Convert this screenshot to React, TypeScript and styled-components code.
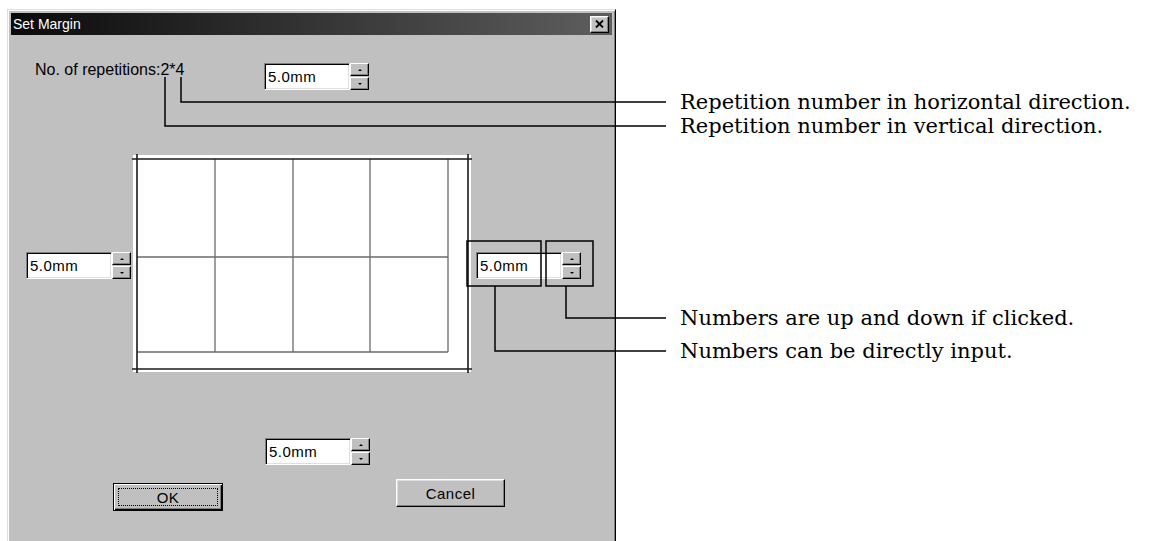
import React from 'react'
import styled, { createGlobalStyle } from 'styled-components'

const GlobalStyle = createGlobalStyle`
  html, body {
    margin: 0;
    padding: 0;
    background: #fff;
  }
  body {
    font-family: 'Liberation Sans', Arial, sans-serif;
  }
`

const Page = styled.div`
  position: relative;
  display: flex;
  align-items: flex-start;
  width: 1154px;
  height: 541px;
  padding: 9px 0 0 7px;
  box-sizing: border-box;
  overflow: hidden;
  background: #fff;
`

const Dialog = styled.div`
  display: flex;
  flex-direction: column;
  flex: none;
  width: 609px;
  height: 545px;
  box-sizing: border-box;
  padding: 3px;
  background: #c0c0c0;
  border-top: 1px solid #dfdfdf;
  border-left: 1px solid #dfdfdf;
  border-right: 1px solid #000;
  border-bottom: 1px solid #000;
  box-shadow: inset 1px 1px 0 #fff, inset -1px -1px 0 #808080;
`

const TitleBar = styled.div`
  display: flex;
  align-items: center;
  justify-content: space-between;
  height: 22px;
  padding: 0 3px 0 2px;
  background: linear-gradient(to right, #0a0a0a, #5e5e5e);
  color: #fff;
  font-size: 14px;
`

const CloseButton = styled.div`
  display: flex;
  align-items: center;
  justify-content: center;
  width: 19px;
  height: 17px;
  box-sizing: border-box;
  background: #c0c0c0;
  border-top: 1px solid #fff;
  border-left: 1px solid #fff;
  border-right: 1px solid #000;
  border-bottom: 1px solid #000;
  box-shadow: inset -1px -1px 0 #808080, inset 1px 1px 0 #dfdfdf;
`

const Client = styled.div`
  display: flex;
  flex-direction: column;
  flex: 1;
`

const Row = styled.div<{ $top: number; $left: number }>`
  display: flex;
  align-items: flex-start;
  margin-top: ${p => p.$top}px;
  padding-left: ${p => p.$left}px;
`

const RepLabel = styled.div`
  width: 229px;
  margin-top: -2px;
  font-size: 16px;
  line-height: 18px;
  color: #000;
`

const Spin = styled.div<{ $top?: number; $left?: number }>`
  display: flex;
  flex: none;
  height: 27px;
  margin-top: ${p => p.$top ?? 0}px;
  margin-left: ${p => p.$left ?? 0}px;
`

const Field = styled.div`
  display: flex;
  align-items: center;
  width: 86px;
  height: 27px;
  box-sizing: border-box;
  padding-left: 3px;
  background: #fff;
  border-top: 1px solid #808080;
  border-left: 1px solid #808080;
  border-right: 1px solid #fff;
  border-bottom: 1px solid #fff;
  box-shadow: inset 1px 1px 0 #000, inset -1px -1px 0 #dfdfdf;
  font-size: 15px;
  letter-spacing: 0.5px;
  color: #000;
`

const Arrows = styled.div`
  display: flex;
  flex-direction: column;
  gap: 1px;
  width: 19px;
`

const ArrowButton = styled.div`
  display: flex;
  align-items: center;
  justify-content: center;
  height: 13px;
  box-sizing: border-box;
  background: #c0c0c0;
  border-top: 1px solid #fff;
  border-left: 1px solid #fff;
  border-right: 1px solid #000;
  border-bottom: 1px solid #000;
  box-shadow: inset -1px -1px 0 #808080;
`

const Tri = styled.span<{ $dir: 'up' | 'down' }>`
  width: 0;
  height: 0;
  border-left: 2px solid transparent;
  border-right: 2px solid transparent;
  ${p => (p.$dir === 'up' ? 'border-bottom: 2px solid #000;' : 'border-top: 2px solid #000;')}
`

const Preview = styled.svg`
  display: block;
  flex: none;
`

const PushButton = styled.button<{ $width: number; $default?: boolean; $top?: number; $left?: number }>`
  display: flex;
  align-items: stretch;
  width: ${p => p.$width}px;
  height: 28px;
  margin-top: ${p => p.$top ?? 0}px;
  margin-left: ${p => p.$left ?? 0}px;
  padding: 4px;
  box-sizing: border-box;
  background: #c0c0c0;
  font: 15px 'Liberation Sans', Arial, sans-serif;
  letter-spacing: 0.5px;
  color: #000;
  ${p =>
    p.$default
      ? `border: 1px solid #000;
         box-shadow: inset 1px 1px 0 #fff, inset -1px -1px 0 #000, inset -2px -2px 0 #808080;`
      : `border-top: 1px solid #fff;
         border-left: 1px solid #fff;
         border-right: 1px solid #000;
         border-bottom: 1px solid #000;
         box-shadow: inset -1px -1px 0 #808080, inset 1px 1px 0 #dfdfdf;`}
`

const Caption = styled.span<{ $focus?: boolean }>`
  display: flex;
  flex: 1;
  align-items: center;
  justify-content: center;
  border: 1px dotted ${p => (p.$focus ? '#000' : 'transparent')};
`

const Notes = styled.div`
  display: flex;
  flex-direction: column;
  margin-left: 64px;
`

const Note = styled.div<{ $gap: number }>`
  margin-top: ${p => p.$gap}px;
  font-family: 'DejaVu Serif', 'Liberation Serif', serif;
  font-size: 21px;
  line-height: 24px;
  color: #000;
  white-space: nowrap;
`

const Callouts = styled.svg`
  position: absolute;
  left: 0;
  top: 0;
  pointer-events: none;
`

const Spinner = ({ top, left }: { top?: number; left?: number }) => (
  <Spin $top={top} $left={left}>
    <Field>5.0mm</Field>
    <Arrows>
      <ArrowButton>
        <Tri $dir="up" />
      </ArrowButton>
      <ArrowButton>
        <Tri $dir="down" />
      </ArrowButton>
    </Arrows>
  </Spin>
)

const cols = [84, 162, 239, 317]

const PagePreview = () => (
  <Preview width={342} height={222} viewBox="0 0 342 222">
    <rect x={2} y={3} width={338} height={217} fill="#fff" />
    <g stroke="#6a6a6a" strokeWidth={1.3}>
      {cols.map(x => (
        <line key={x} x1={x} y1={7} x2={x} y2={200} />
      ))}
      <line x1={6} y1={105} x2={317} y2={105} />
      <line x1={6} y1={200} x2={317} y2={200} />
    </g>
    <g stroke="#1a1a1a" strokeWidth={1.6}>
      <line x1={6} y1={2} x2={6} y2={221} />
      <line x1={337} y1={2} x2={337} y2={221} />
      <line x1={1} y1={7} x2={341} y2={7} />
      <line x1={1} y1={217} x2={341} y2={217} />
    </g>
  </Preview>
)

export default function App() {
  return (
    <Page>
      <GlobalStyle />
      <Dialog>
        <TitleBar>
          <span>Set Margin</span>
          <CloseButton>
            <svg width="9" height="8" viewBox="0 0 9 8">
              <path d="M1 0.5 L8 7.5 M8 0.5 L1 7.5" stroke="#000" strokeWidth="1.8" />
            </svg>
          </CloseButton>
        </TitleBar>
        <Client>
          <Row $top={28} $left={24}>
            <RepLabel>No. of repetitions:2*4</RepLabel>
            <Spinner />
          </Row>
          <Row $top={62} $left={15}>
            <Spinner top={100} />
            <PagePreview />
            <Spinner top={100} left={3} />
          </Row>
          <Row $top={64} $left={254}>
            <Spinner />
          </Row>
          <Row $top={14} $left={102}>
            <PushButton $width={110} $default $top={4}>
              <Caption $focus>OK</Caption>
            </PushButton>
            <PushButton $width={109} $left={173}>
              <Caption>Cancel</Caption>
            </PushButton>
          </Row>
        </Client>
      </Dialog>
      <Notes>
        <Note $gap={81}>Repetition number in horizontal direction.</Note>
        <Note $gap={0}>Repetition number in vertical direction.</Note>
        <Note $gap={168}>Numbers are up and down if clicked.</Note>
        <Note $gap={9}>Numbers can be directly input.</Note>
      </Notes>
      <Callouts width={1154} height={541} viewBox="0 0 1154 541">
        <g fill="none" stroke="#000" strokeWidth={1.5}>
          <path d="M181 77 V102 H666" />
          <path d="M165 77 V126 H666" />
          <rect x={467} y={241} width={74} height={45} />
          <rect x={546} y={241} width={47} height={45} />
          <path d="M566 286 V318 H666" />
          <path d="M495 286 V351 H666" />
        </g>
      </Callouts>
    </Page>
  )
}
